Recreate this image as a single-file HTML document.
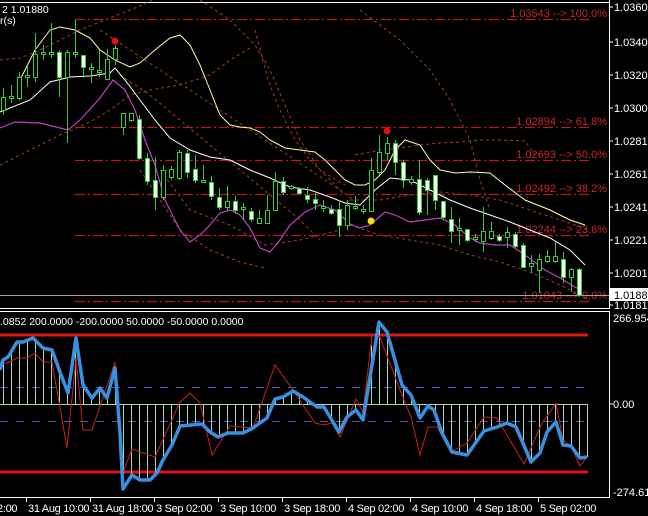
<!DOCTYPE html>
<html><head><meta charset="utf-8"><style>
html,body{margin:0;padding:0;background:#000;width:648px;height:516px;overflow:hidden}
svg{display:block}
text{font-family:"Liberation Sans",sans-serif;font-size:11px}
.ax{fill:#fff;font-size:10.5px}
.tx{fill:#fff;font-size:10.5px;letter-spacing:-0.3px}
.fl{fill:#c82828;font-size:10.5px}
</style></head><body>
<svg width="648" height="516" viewBox="0 0 648 516" xmlns="http://www.w3.org/2000/svg">
<rect width="648" height="516" fill="#000"/>
<line x1="0" y1="2.5" x2="609" y2="2.5" stroke="#fff"/>
<line x1="609.5" y1="0" x2="609.5" y2="309" stroke="#fff"/>
<line x1="0" y1="308.5" x2="609" y2="308.5" stroke="#fff"/>
<line x1="0" y1="311.5" x2="609" y2="311.5" stroke="#fff"/>
<line x1="609.5" y1="311" x2="609.5" y2="498" stroke="#fff"/>
<line x1="0" y1="497.5" x2="609" y2="497.5" stroke="#fff"/>
<g stroke="#fff"><line x1="609" y1="7" x2="613" y2="7"/><line x1="609" y1="42" x2="613" y2="42"/><line x1="609" y1="75" x2="613" y2="75"/><line x1="609" y1="108" x2="613" y2="108"/><line x1="609" y1="141" x2="613" y2="141"/><line x1="609" y1="174" x2="613" y2="174"/><line x1="609" y1="207" x2="613" y2="207"/><line x1="609" y1="240" x2="613" y2="240"/><line x1="609" y1="273" x2="613" y2="273"/><line x1="609" y1="305" x2="613" y2="305"/><line x1="609" y1="404" x2="613" y2="404"/></g>
<g class="ax">
<text x="614" y="11">1.03600</text><text x="614" y="46">1.03405</text><text x="614" y="79">1.03205</text><text x="614" y="112">1.03005</text><text x="614" y="145">1.02810</text><text x="614" y="178">1.02610</text><text x="614" y="211">1.02410</text><text x="614" y="244">1.02210</text><text x="614" y="277">1.02015</text><text x="614" y="309">1.01815</text>
<text x="613" y="322">266.9544</text><text x="613" y="408">0.00</text><text x="613" y="496">-274.616</text>
</g>
<rect x="610" y="288" width="38" height="13" fill="#fff"/>
<text x="614" y="299" fill="#000" font-size="10.5">1.01880</text>
<g stroke="#fff"><line x1="26.5" y1="498" x2="26.5" y2="502"/><line x1="90.5" y1="498" x2="90.5" y2="502"/><line x1="154.5" y1="498" x2="154.5" y2="502"/><line x1="218.5" y1="498" x2="218.5" y2="502"/><line x1="282.5" y1="498" x2="282.5" y2="502"/><line x1="346.5" y1="498" x2="346.5" y2="502"/><line x1="410.5" y1="498" x2="410.5" y2="502"/><line x1="474.5" y1="498" x2="474.5" y2="502"/><line x1="538.5" y1="498" x2="538.5" y2="502"/></g>
<g class="tx">
<text x="-3" y="512">2:00</text><text x="28" y="512">31 Aug 10:00</text><text x="92" y="512">31 Aug 18:00</text><text x="156" y="512">3 Sep 02:00</text><text x="220" y="512">3 Sep 10:00</text><text x="284" y="512">3 Sep 18:00</text><text x="348" y="512">4 Sep 02:00</text><text x="412" y="512">4 Sep 10:00</text><text x="476" y="512">4 Sep 18:00</text><text x="540" y="512">5 Sep 02:00</text>
</g>
<text x="2" y="13" class="ax">2 1.01880</text>
<text x="0" y="24" class="ax">r(s)</text>
<text x="0" y="325" class="ax">.0852 200.0000 -200.0000 50.0000 -50.0000 0.0000</text>

<g fill="none" stroke="#c85030" stroke-width="1" stroke-dasharray="3,3" opacity="0.8">
<polyline points="0,60 20,58 40,50 60,40 80,30 100,22 120,14 140,6 152,0"/>
<polyline points="0,165 30,150 60,135 90,122 110,110 130,95 150,90 180,85 210,75 230,60 250,48"/>
<polyline points="200,0 230,20 255,45 270,70 285,105 300,140 320,170 345,185"/>
<polyline points="100,30 130,50 160,70 190,90 220,110 250,130 280,150 310,170 340,190 360,205"/>
<polyline points="120,75 150,95 180,120 210,145 240,170 270,195 300,220 320,240"/>
<polyline points="140,170 160,200 180,230 210,250 240,262 265,268"/>
<polyline points="255,30 268,80 280,110 295,140 310,160 330,180 345,195"/>
<polyline points="355,155 380,150 400,148 420,145 440,143 460,142 480,140 500,140 525,141 535,155"/>
<polyline points="350,200 380,200 410,195 440,192 470,195 500,200 530,210 560,220 590,230"/>
<polyline points="350,225 380,235 410,240 440,245 470,255 500,262 530,272 560,285 590,300"/>
<polyline points="160,170 190,210 230,225 265,245 300,240 340,230"/>
<polyline points="360,10 400,40 430,70 450,100 470,140 480,180 490,210"/>
</g>

<g stroke="#c01818" stroke-width="1.2" stroke-dasharray="10,3,2,3">
<line x1="75" y1="19.5" x2="592" y2="19.5"/>
<line x1="75" y1="127.5" x2="592" y2="127.5"/>
<line x1="75" y1="160.5" x2="592" y2="160.5"/>
<line x1="75" y1="194.5" x2="592" y2="194.5"/>
<line x1="75" y1="235.5" x2="592" y2="235.5"/>
<line x1="75" y1="301.5" x2="592" y2="301.5"/>
</g>
<g class="fl" text-anchor="end">
<text x="607" y="17">1.03543 --&gt; 100.0%</text>
<text x="607" y="125">1.02894 --&gt; 61.8%</text>
<text x="607" y="158">1.02693 --&gt; 50.0%</text>
<text x="607" y="192">1.02492 --&gt; 38.2%</text>
<text x="607" y="233">1.02244 --&gt; 23.6%</text>
<text x="607" y="299">1.01043 --&gt; 0.0%</text>
</g>
<line x1="0" y1="295.5" x2="609" y2="295.5" stroke="#a0a0a0"/>

<polyline fill="none" stroke="#ffffa8" stroke-width="1" points="20,80 35,50 50,30 60,27 75,30 90,38 100,50 115,60 130,67 140,63 155,50 170,38 180,35 190,45 200,65 210,90 220,115 230,125 240,127 250,128 260,132 270,140 285,148 300,150 315,152 325,160 335,170 345,180 355,185 365,185 375,180 385,170 395,150 405,140 420,145 430,160 440,170 455,173 470,172 490,173 505,185 525,200 550,210 570,220 585,225"/>
<polyline fill="none" stroke="#ffffff" stroke-width="1" points="0,112 10,108 30,100 50,82 70,77 90,76 110,73 115,68 125,80 140,100 155,120 170,138 190,150 210,157 230,160 250,170 270,178 290,187 310,190 330,197 345,203 360,205 375,190 390,178 410,180 430,190 450,200 470,208 490,215 510,222 530,230 550,238 570,250 585,265"/>
<polyline fill="none" stroke="#c040c0" stroke-width="1.2" points="0,128 15,122 40,123 60,128 68,130 80,120 100,98 113,80 125,90 135,110 145,140 155,165 165,200 180,230 190,242 200,235 210,225 220,213 230,210 240,215 250,228 260,248 270,252 280,240 290,225 305,212 320,205 335,210 350,224 360,228 370,225 385,212 395,215 410,222 425,220 440,218 455,225 470,238 480,243 495,245 510,245 525,255 545,270 560,278 580,290"/>

<path fill="none" stroke="#3cc83c" stroke-width="1" d="M3.5 88V115M11.5 85V103M19.5 72V100M27.5 65V87M35.5 33V82M43.5 45V60M51.5 23V58M59.5 50V97M67.5 50V143M75.5 20V58M83.5 55V78M91.5 63V83M99.5 50V77M107.5 49V80M115.5 45V65M123.5 113V135M131.5 113V122M139.5 115V160M147.5 153V185M155.5 157V210M163.5 165V200M171.5 166V180M179.5 150V180M187.5 150V178M195.5 155V183M203.5 165V183M211.5 176V200M219.5 188V210M227.5 186V210M235.5 196V214M243.5 203V220M251.5 208V222M259.5 210V224M267.5 195V223M275.5 172V210M283.5 177V195M291.5 185V190M299.5 187V195M307.5 187V203M315.5 193V210M323.5 200V212M331.5 205V215M339.5 200V237M347.5 200V230M355.5 196V210M363.5 205V214M371.5 158V212M379.5 135V175M387.5 137V160M395.5 140V175M403.5 160V188M411.5 176V185M419.5 160V215M427.5 178V215M435.5 175V210M443.5 201V220M451.5 207V243M459.5 218V245M467.5 229V242M475.5 234V242M483.5 207V252M491.5 222V240M499.5 234V242M507.5 227V248M515.5 232V248M523.5 243V268M531.5 255V273M539.5 254V293M547.5 250V263M555.5 242V263M563.5 252V283M571.5 268V292M579.5 268V297"/>
<g stroke="#3cc83c" stroke-width="1">
<g fill="#000">
<rect x="1.5" y="97.5" width="4" height="13"/><rect x="9.5" y="96.5" width="4" height="2"/><rect x="17.5" y="77.5" width="4" height="21"/><rect x="25.5" y="75.5" width="4" height="2"/><rect x="33.5" y="54.5" width="4" height="23"/><rect x="41.5" y="52.5" width="4" height="2"/><rect x="49.5" y="52.5" width="4" height="2"/><rect x="65.5" y="52.5" width="4" height="25"/><rect x="73.5" y="52.5" width="4" height="2"/><rect x="89.5" y="67.5" width="4" height="2"/><rect x="97.5" y="70.5" width="4" height="2"/><rect x="105.5" y="59.5" width="4" height="20"/><rect x="113.5" y="48.5" width="4" height="11"/><rect x="121.5" y="113.5" width="4" height="14"/><rect x="129.5" y="113.5" width="4" height="7"/><rect x="161.5" y="170.5" width="4" height="27"/><rect x="169.5" y="169.5" width="4" height="8"/><rect x="177.5" y="152.5" width="4" height="26"/><rect x="201.5" y="180.5" width="4" height="2"/><rect x="225.5" y="201.5" width="4" height="6"/><rect x="241.5" y="207.5" width="4" height="2"/><rect x="257.5" y="218.5" width="4" height="5"/><rect x="265.5" y="210.5" width="4" height="13"/><rect x="273.5" y="181.5" width="4" height="29"/><rect x="289.5" y="186.5" width="4" height="2"/><rect x="321.5" y="206.5" width="4" height="2"/><rect x="345.5" y="205.5" width="4" height="20"/><rect x="353.5" y="206.5" width="4" height="2"/><rect x="361.5" y="209.5" width="4" height="2"/><rect x="369.5" y="170.5" width="4" height="41"/><rect x="377.5" y="152.5" width="4" height="20"/><rect x="385.5" y="143.5" width="4" height="10"/><rect x="409.5" y="179.5" width="4" height="3"/><rect x="457.5" y="228.5" width="4" height="2"/><rect x="473.5" y="237.5" width="4" height="2"/><rect x="481.5" y="231.5" width="4" height="10"/><rect x="489.5" y="231.5" width="4" height="7"/><rect x="505.5" y="232.5" width="4" height="5"/><rect x="529.5" y="263.5" width="4" height="3"/><rect x="537.5" y="259.5" width="4" height="11"/><rect x="545.5" y="256.5" width="4" height="5"/><rect x="553.5" y="256.5" width="4" height="5"/><rect x="569.5" y="269.5" width="4" height="8"/>
</g>
<g fill="#f4fff4">
<rect x="57.5" y="52.5" width="4" height="25"/><rect x="81.5" y="55.5" width="4" height="12"/><rect x="137.5" y="119.5" width="4" height="39"/><rect x="145.5" y="158.5" width="4" height="23"/><rect x="153.5" y="180.5" width="4" height="17"/><rect x="185.5" y="153.5" width="4" height="19"/><rect x="193.5" y="169.5" width="4" height="11"/><rect x="209.5" y="182.5" width="4" height="14"/><rect x="217.5" y="197.5" width="4" height="10"/><rect x="233.5" y="201.5" width="4" height="9"/><rect x="249.5" y="211.5" width="4" height="8"/><rect x="281.5" y="181.5" width="4" height="11"/><rect x="297.5" y="188.5" width="4" height="5"/><rect x="305.5" y="195.5" width="4" height="4"/><rect x="313.5" y="199.5" width="4" height="4"/><rect x="329.5" y="209.5" width="4" height="4"/><rect x="337.5" y="209.5" width="4" height="16"/><rect x="393.5" y="143.5" width="4" height="19"/><rect x="401.5" y="162.5" width="4" height="18"/><rect x="417.5" y="179.5" width="4" height="33"/><rect x="425.5" y="180.5" width="4" height="10"/><rect x="433.5" y="175.5" width="4" height="25"/><rect x="441.5" y="201.5" width="4" height="16"/><rect x="449.5" y="219.5" width="4" height="12"/><rect x="465.5" y="229.5" width="4" height="11"/><rect x="497.5" y="236.5" width="4" height="4"/><rect x="513.5" y="234.5" width="4" height="12"/><rect x="521.5" y="245.5" width="4" height="22"/><rect x="561.5" y="259.5" width="4" height="18"/><rect x="577.5" y="269.5" width="4" height="26"/>
</g></g>
<circle cx="115" cy="41" r="3.5" fill="#e01010"/>
<circle cx="387" cy="131" r="3.5" fill="#e01010"/>
<circle cx="371" cy="221" r="3.5" fill="#f0e010"/>

<line x1="0" y1="335" x2="588" y2="335" stroke="#e01414" stroke-width="3"/>
<line x1="0" y1="472" x2="588" y2="472" stroke="#e01414" stroke-width="3"/>
<g stroke="#4858c8" stroke-width="1" stroke-dasharray="8,8"><line x1="0" y1="387.5" x2="590" y2="387.5"/><line x1="0" y1="421.5" x2="590" y2="421.5"/></g>
<line x1="0" y1="404.5" x2="588" y2="404.5" stroke="#a8d8a8"/>
<path fill="none" stroke="#a8d8a8" stroke-width="1" d="M3.5 404V360M11.5 404V352M19.5 404V342M27.5 404V341M35.5 404V338M43.5 404V348M51.5 404V350M59.5 404V369M67.5 404V391M75.5 404V345M83.5 404V385M91.5 404V397M99.5 404V389M107.5 404V398M115.5 404V368M123.5 404V489M131.5 404V476M139.5 404V480M147.5 404V480M155.5 404V475M163.5 404V460M171.5 404V446M179.5 404V428M187.5 404V426M195.5 404V425M203.5 404V425M211.5 404V433M219.5 404V437M227.5 404V433M235.5 404V433M243.5 404V433M251.5 404V429M259.5 404V424M267.5 404V418M275.5 404V399M283.5 404V397M291.5 404V392M299.5 404V395M307.5 404V399M315.5 404V406M323.5 404V407M331.5 404V420M339.5 404V432M347.5 404V417M355.5 404V410M363.5 404V420M371.5 404V345M379.5 404V322M387.5 404V332M395.5 404V360M403.5 404V386M411.5 404V395M419.5 404V416M427.5 404V406M435.5 404V411M443.5 404V435M451.5 404V452M459.5 404V454M467.5 404V455M475.5 404V444M483.5 404V432M491.5 404V429M499.5 404V427M507.5 404V423M515.5 404V426M523.5 404V445M531.5 404V462M539.5 404V455M547.5 404V432M555.5 404V422M563.5 404V445M571.5 404V446M579.5 404V458M587.5 404V457"/>
<polyline fill="none" stroke="#c82020" stroke-width="1" points="0,363 7,363 17,358 27,358 35,353 43,362 52,362 67,448 76,358 83,430 92,430 115,362 123,473 132,449 155,457 180,402 190,393 200,403 212,455 230,426 253,428 275,365 293,390 315,423 324,425 332,423 340,437 356,399 363,412 372,336 379,335 402,395 411,417 420,455 428,427 437,427 451,452 467,443 484,417 497,418 524,464 541,425 556,403 563,440 571,446 580,466 587,457"/>
<polyline fill="none" stroke="#3a90e0" stroke-width="3.5" stroke-linejoin="round" points="0,370 3,360 8,357 17,342 23,342 33,338 43,348 52,350 60,372 68,393 76,338 83,385 92,398 100,388 107,398 115,368 120,433 123,489 132,475 140,480 150,480 157,473 163,460 172,445 180,426 202,424 210,432 218,437 228,433 243,433 253,428 267,418 275,399 283,397 293,391 303,397 317,407 324,407 339,432 347,417 356,410 363,420 379,322 387,332 402,385 411,395 420,418 428,406 434,410 442,433 452,452 467,455 484,431 497,427 507,423 516,427 531,462 540,453 547,432 556,422 563,445 571,446 580,458 587,457"/>
</svg>
</body></html>
